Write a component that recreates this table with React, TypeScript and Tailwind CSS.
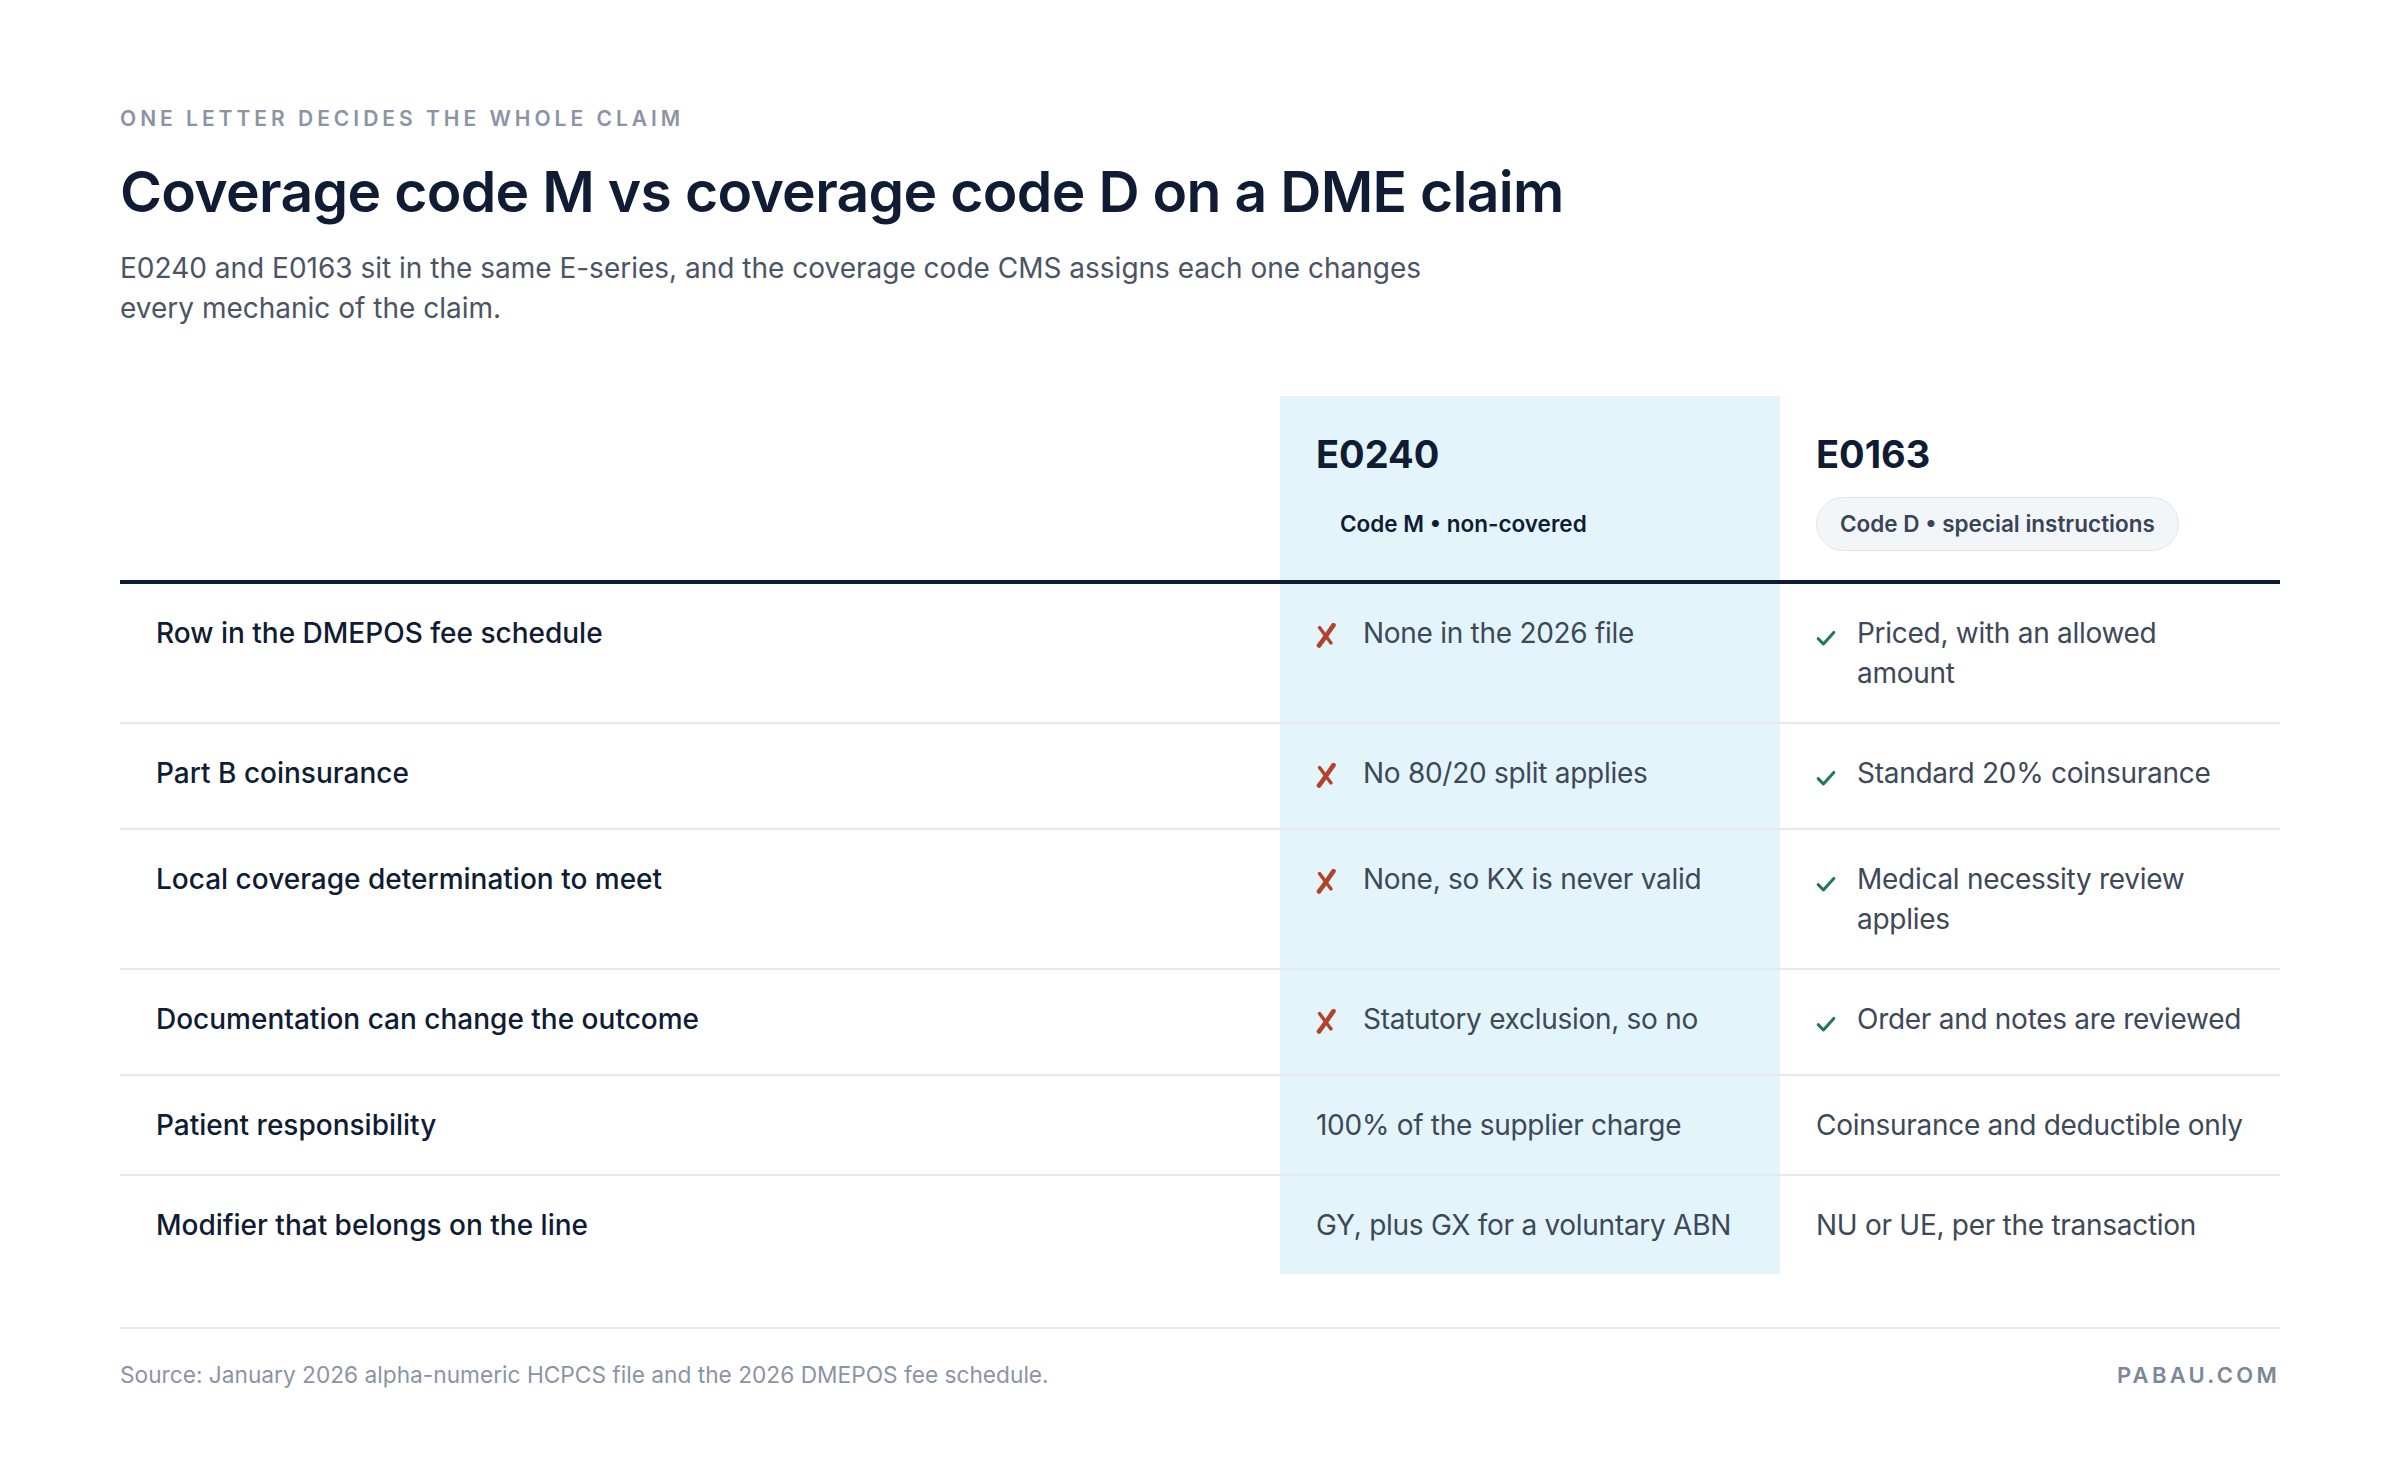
import React from "react";

type Cell = { icon?: "x" | "check"; text: string };
type Row = { label: string; a: Cell; b: Cell };

const rows: Row[] = [
  {
    label: "Row in the DMEPOS fee schedule",
    a: { icon: "x", text: "None in the 2026 file" },
    b: { icon: "check", text: "Priced, with an allowed\namount" },
  },
  {
    label: "Part B coinsurance",
    a: { icon: "x", text: "No 80/20 split applies" },
    b: { icon: "check", text: "Standard 20% coinsurance" },
  },
  {
    label: "Local coverage determination to meet",
    a: { icon: "x", text: "None, so KX is never valid" },
    b: { icon: "check", text: "Medical necessity review\napplies" },
  },
  {
    label: "Documentation can change the outcome",
    a: { icon: "x", text: "Statutory exclusion, so no" },
    b: { icon: "check", text: "Order and notes are reviewed" },
  },
  {
    label: "Patient responsibility",
    a: { text: "100% of the supplier charge" },
    b: { text: "Coinsurance and deductible only" },
  },
  {
    label: "Modifier that belongs on the line",
    a: { text: "GY, plus GX for a voluntary ABN" },
    b: { text: "NU or UE, per the transaction" },
  },
];

function XIcon() {
  return (
    <span className="flex h-[46px] w-[47px] flex-none items-start">
      <svg width="22" height="25" viewBox="0 0 22 25" className="ml-[-1px] mt-[10px] block">
        <path d="M4.5 4.5 L16 20" stroke="#b3422d" strokeWidth="3.4" strokeLinecap="round" fill="none" />
        <path d="M18.5 2.2 C 14 8.5, 9.5 15.5, 4 22.5" stroke="#b3422d" strokeWidth="4.6" strokeLinecap="round" fill="none" />
      </svg>
    </span>
  );
}

function CheckIcon() {
  return (
    <span className="flex h-[46px] w-[41px] flex-none items-start">
      <svg width="20" height="17" viewBox="0 0 20 17" className="mt-[17px] block">
        <path d="M2.2 8.6 L7.4 14 L17.8 2.4" stroke="#1f7a4f" strokeWidth="3" strokeLinecap="round" strokeLinejoin="round" fill="none" />
      </svg>
    </span>
  );
}

function CellContent({ cell }: { cell: Cell }) {
  return (
    <div className="flex items-start">
      {cell.icon === "x" && <XIcon />}
      {cell.icon === "check" && <CheckIcon />}
      <span className="whitespace-pre text-[28px] leading-[40px] tracking-[-0.01em] text-[#3d4858]">{cell.text}</span>
    </div>
  );
}

export default function App() {
  return (
    <div
      className="min-h-screen bg-white px-[120px] pt-[105px]"
      style={{ fontFamily: "Inter, 'Noto Sans', sans-serif" }}
    >
      <p className="text-[21px] font-semibold uppercase leading-[28px] tracking-[0.19em] text-[#8b94a5]">
        One letter decides the whole claim
      </p>
      <h1 className="mt-[27px] text-[57px] font-semibold leading-[64px] tracking-[-0.012em] text-[#101c34]">
        Coverage code M vs coverage code D on a DME claim
      </h1>
      <p className="mt-[24px] max-w-[1345px] text-[28px] leading-[40px] text-[#4a5465]">
        E0240 and E0163 sit in the same E-series, and the coverage code CMS assigns each one changes every mechanic of the claim.
      </p>

      <div className="mt-[68px] grid grid-cols-[1160px_500px_500px]">
        {/* header */}
        <div className="border-b-[4px] border-[#101c34]" />
        <div className="border-b-[4px] border-[#101c34] bg-[#e3f5fb] pl-[36px] pr-[24px] pb-[29px] pt-[35px]">
          <div className="text-[38px] font-bold leading-[46px] text-[#101c34]">E0240</div>
          <div className="mt-[20px] inline-flex whitespace-nowrap rounded-full border border-transparent px-[23px] py-[12px] text-[22.5px] font-semibold leading-[28px] text-[#101c34]">
            Code M • non-covered
          </div>
        </div>
        <div className="border-b-[4px] border-[#101c34] pl-[36px] pr-[24px] pb-[29px] pt-[35px]">
          <div className="text-[38px] font-bold leading-[46px] text-[#101c34]">E0163</div>
          <div className="mt-[20px] inline-flex whitespace-nowrap rounded-full border border-[#e1e6ed] bg-[#f3f6f9] px-[23px] py-[12px] text-[22.5px] font-semibold leading-[28px] text-[#384457]">
            Code D • special instructions
          </div>
        </div>

        {rows.map((r, i) => {
          const last = i === rows.length - 1;
          const border = last ? "" : "border-b-2 border-[#e6e8ec]";
          return (
            <React.Fragment key={i}>
              <div className={`${border} py-[29px] pl-[36px] pr-[24px]`}>
                <span className="text-[28px] font-medium leading-[40px] text-[#101c34]">{r.label}</span>
              </div>
              <div className={`${border} bg-[#e3f5fb] py-[29px] pl-[36px] pr-[4px]`}>
                <CellContent cell={r.a} />
              </div>
              <div className={`${border} py-[29px] pl-[36px] pr-[4px]`}>
                <CellContent cell={r.b} />
              </div>
            </React.Fragment>
          );
        })}
      </div>

      <div className="mt-[53px] flex items-center justify-between border-t-2 border-[#e6e8ec] pt-[30px]">
        <span className="text-[22.7px] leading-[32px] text-[#8b94a5]">
          Source: January 2026 alpha-numeric HCPCS file and the 2026 DMEPOS fee schedule.
        </span>
        <span className="text-[22px] font-semibold leading-[32px] tracking-[0.15em] text-[#7d8799]">PABAU.COM</span>
      </div>
    </div>
  );
}
